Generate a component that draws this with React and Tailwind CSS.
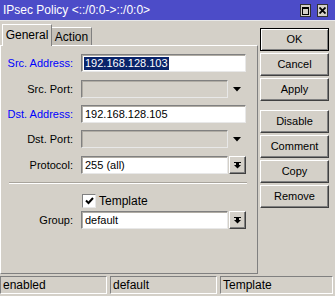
import React from "react";

const raised = "border border-t-white border-l-white border-r-[#404040] border-b-[#404040] shadow-[inset_-1px_-1px_0_#808080]";

function Btn({ children, def, className = "" }) {
  return (
    <div
      className={
        "h-[23px] w-[69px] flex items-center justify-center text-[11px] text-black " +
        (def
          ? "border border-black shadow-[inset_1px_1px_0_#fff,inset_-1px_-1px_0_#808080]"
          : raised) +
        " " +
        className
      }
    >
      {children}
    </div>
  );
}

function Field({ children, disabled, w = "w-[165px]" }) {
  return (
    <div
      className={
        "h-[18px] " +
        w +
        " border border-t-[#808080] border-l-[#808080] border-r-[#e8e8e8] border-b-[#e8e8e8] shadow-[inset_1px_1px_0_#b0aca4] flex items-center pl-[2px] text-[11px] text-black " +
        (disabled ? "bg-[#d4d0c8]" : "bg-white")
      }
    >
      {children}
    </div>
  );
}

function Arrow() {
  return (
    <svg width="8" height="5" viewBox="0 0 8 5" className="ml-[5px]">
      <path d="M0 0H8L4 4.5Z" fill="#000" />
    </svg>
  );
}

function DropBtn() {
  return (
    <div className="ml-[1px] h-[18px] w-[17px] border border-t-white border-l-white border-r-[#404040] border-b-[#404040] shadow-[inset_-1px_-1px_0_#808080] flex items-center justify-center">
      <svg width="7" height="7" viewBox="0 0 7 7">
        <rect x="0" y="0" width="7" height="1" fill="#000" />
        <rect x="2" y="1" width="3" height="2" fill="#000" />
        <path d="M0 3H7L3.5 6.5Z" fill="#000" />
      </svg>
    </div>
  );
}

function Row({ label, blue, children, className = "" }) {
  return (
    <div className={"flex items-center h-[18px] " + className}>
      <div className={"w-[72px] text-right text-[11px] " + (blue ? "text-[#0000ff]" : "text-black")}>{label}</div>
      <div className="ml-[8px] flex items-center">{children}</div>
    </div>
  );
}

export default function App() {
  return (
    <div className="w-[335px] h-[296px] bg-[#d4d0c8] flex flex-col overflow-hidden font-['Liberation_Sans',Arial,sans-serif]">
      <div className="h-[20px] bg-[#4c4cc8] flex items-center justify-between pl-[3px] pr-[7px]">
        <span className="text-white text-[12px] leading-none">IPsec Policy &lt;::/0:0-&gt;::/0:0&gt;</span>
        <div className="flex items-center gap-[6px] mt-[1px]">
          <div className="w-[11px] h-[13px] bg-[#d4d0c8] border border-[#303030] flex items-center justify-center">
            <div className="w-[7px] h-[8px] border border-black border-t-2" />
          </div>
          <div className="w-[11px] h-[13px] bg-[#d4d0c8] border border-[#303030] flex items-center justify-center">
            <svg width="7" height="7" viewBox="0 0 7 7">
              <path d="M0.5 0.5L6.5 6.5M6.5 0.5L0.5 6.5" stroke="#000" strokeWidth="1.8" />
            </svg>
          </div>
        </div>
      </div>
      <div className="h-[1px] bg-[#e8e8e8]" />
      <div className="flex h-[255px]">
        <div className="w-[258px] flex flex-col pt-[2px]">
          <div className="h-[22px] flex items-end pl-[2px]">
            <div className="relative z-10 h-[22px] w-[50px] bg-[#d4d0c8] border-t border-l border-t-white border-l-white border-r border-r-[#808080] flex items-center justify-center text-[12px] text-black -mb-[1px] pb-[2px]">
              General
            </div>
            <div className="h-[18px] w-[40px] bg-[#c4c0b8] border-t border-t-white border-r border-r-[#808080] flex items-center justify-center text-[12px] text-black">
              Action
            </div>
          </div>
          <div className="h-[229px] border border-t-white border-l-white border-r-[#808080] border-b-[#808080] flex flex-col pt-[8px]">
            <Row label="Src. Address:" blue>
              <Field>
                <span className="bg-[#0a246a] text-white leading-[13px] px-[1px]">192.168.128.103</span>
              </Field>
            </Row>
            <Row label="Src. Port:" className="mt-[8px]">
              <Field disabled w="w-[147px]" />
              <Arrow />
            </Row>
            <Row label="Dst. Address:" blue className="mt-[7px]">
              <Field>
                <span className="pl-[1px]">192.168.128.105</span>
              </Field>
            </Row>
            <Row label="Dst. Port:" className="mt-[7px]">
              <Field disabled w="w-[147px]" />
              <Arrow />
            </Row>
            <Row label="Protocol:" className="mt-[8px]">
              <Field w="w-[147px]">
                <span className="pl-[1px]">255 (all)</span>
              </Field>
              <DropBtn />
            </Row>
            <div className="ml-[8px] w-[238px] mt-[8px] h-[2px] border-t border-t-[#a8a49c] border-b border-b-white" />
            <div className="flex items-center mt-[10px] h-[14px] pl-[81px]">
              <div className="w-[14px] h-[14px] bg-white border border-t-[#808080] border-l-[#808080] border-r-[#e8e8e8] border-b-[#e8e8e8] flex items-center justify-center">
                <svg width="9" height="8" viewBox="0 0 9 8">
                  <path d="M1 3.5L3.5 6L8 1" stroke="#000" strokeWidth="2" fill="none" />
                </svg>
              </div>
              <span className="ml-[3px] text-[12px] text-black">Template</span>
            </div>
            <Row label="Group:" className="mt-[3px]">
              <Field w="w-[147px]">
                <span className="pl-[1px]">default</span>
              </Field>
              <DropBtn />
            </Row>
          </div>
        </div>
        <div className="ml-[2px] flex flex-col pt-[7px] gap-[2px]">
          <Btn def>OK</Btn>
          <Btn>Cancel</Btn>
          <Btn>Apply</Btn>
          <Btn className="mt-[7px]">Disable</Btn>
          <Btn>Comment</Btn>
          <Btn>Copy</Btn>
          <Btn>Remove</Btn>
        </div>
      </div>
      <div className="flex gap-[3px] h-[18px]">
        {["enabled", "default", "Template"].map((t, i) => (
          <div
            key={t}
            className={
              (i === 2 ? "w-[113px]" : "w-[107px]") +
              " h-[18px] border border-t-[#808080] border-l-[#808080] border-r-white border-b-white flex items-center pl-[2px] text-[12px] text-black"
            }
          >
            {t}
          </div>
        ))}
      </div>
    </div>
  );
}
